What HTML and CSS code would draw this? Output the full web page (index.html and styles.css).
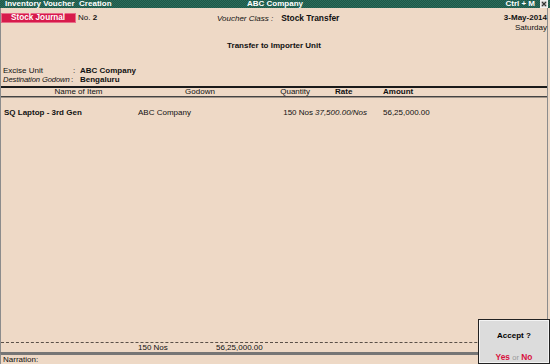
FILE: index.html
```html
<!DOCTYPE html>
<html>
<head>
<meta charset="utf-8">
<link rel="stylesheet" href="styles.css">
</head>
<body>
<div class="screen">
  <div class="titlebar">
    <span class="tb-left">Inventory Voucher&nbsp; Creation</span>
    <span class="tb-center">ABC Company</span>
    <span class="tb-right">Ctrl + M
      <svg class="close" width="8" height="8" viewBox="0 0 8 8"><rect x="0.5" y="0.5" width="7" height="7" fill="#d8d8d8" stroke="#f0f0f0"/><path d="M2 2 L6 6 M6 2 L2 6" stroke="#333" stroke-width="1.2"/></svg>
    </span>
  </div>
  <div class="main">
    <div class="toprow">
      <div class="vtype">Stock Journal</div>
      <div class="vno">No. <b>2</b></div>
      <div class="vclass"><i>Voucher Class :</i><b class="vclass-val">Stock Transfer</b></div>
      <div class="date"><b>3-May-2014</b><span>Saturday</span></div>
    </div>
    <div class="subtitle">Transfer to Importer Unit</div>
    <div class="info">
      <div class="info-row"><span class="lbl">Excise Unit</span><span class="colon">:</span><b>ABC Company</b></div>
      <div class="info-row"><i class="lbl lbl-it">Destination Godown</i><span class="colon">:</span><b>Bengaluru</b></div>
    </div>
    <div class="grid head">
      <div class="c-name">Name of Item</div>
      <div class="c-godown">Godown</div>
      <div class="c-qty">Quantity</div>
      <div class="c-rate"><b>Rate</b></div>
      <div class="c-amt"><b>Amount</b></div>
    </div>
    <div class="grid row">
      <div class="r-name"><b>SQ Laptop - 3rd Gen</b></div>
      <div class="r-godown">ABC Company</div>
      <div class="r-qty">150 Nos</div>
      <div class="r-rate"><i>37,500.00/Nos</i></div>
      <div class="r-amt">56,25,000.00</div>
    </div>
    <div class="spacer"></div>
    <div class="totals">
      <div class="t-qty">150 Nos</div>
      <div class="t-amt">56,25,000.00</div>
    </div>
  </div>
  <div class="narration">Narration:</div>
  <div class="accept">
    <div class="accept-q">Accept ?</div>
    <div class="accept-a"><b class="red">Yes</b> <span class="or">or</span> <b class="red">No</b></div>
  </div>
</div>
</body>
</html>
```

FILE: styles.css
```css
* { box-sizing: border-box; margin: 0; padding: 0; }
html, body { width: 550px; height: 364px; overflow: hidden; }
body {
  background: #eed9c6;
  font-family: "Liberation Sans", Arial, sans-serif;
  font-size: 8px;
  color: #111;
}
.screen {
  position: relative;
  width: 550px;
  height: 364px;
  display: flex;
  flex-direction: column;
}
.titlebar {
  height: 8px;
  line-height: 8px;
  display: flex;
  align-items: center;
  justify-content: space-between;
  color: #fff;
  font-weight: bold;
  font-size: 8px;
  background: repeating-conic-gradient(#1c5949 0 25%, #2c6b5a 0 50%) 0 0 / 2px 2px;
  padding: 0 2px 0 5px;
  position: relative;
}
.tb-center {
  position: absolute;
  left: 0; right: 0;
  text-align: center;
  pointer-events: none;
}
.tb-right { display: flex; align-items: center; gap: 5px; }
.close { display: block; }
.main {
  flex: 1;
  display: flex;
  flex-direction: column;
  border-left: 1px solid #8c8c8c;
  border-right: 1px solid #8c8c8c;
  margin-right: 2px;
}
.toprow {
  margin-top: 5px;
  display: flex;
  align-items: flex-start;
  height: 20px;
}
.vtype {
  background: #d71b4b;
  color: #fff;
  font-weight: bold;
  height: 10px;
  line-height: 10px;
  width: 75px;
  padding-left: 10px;
  font-size: 8.2px;
  box-shadow: inset 0 0 0 1px #e86a88;
}
.vno {
  line-height: 10px;
  margin-left: 2px;
  width: 139px;
}
.vclass { line-height: 10px; }
.vclass-val { margin-left: 8px; font-size: 8.4px; }
.date {
  margin-left: auto;
  display: flex;
  flex-direction: column;
  align-items: flex-end;
  line-height: 10px;
}
.subtitle {
  margin-top: 8px;
  text-align: center;
  font-weight: bold;
  line-height: 10px;
}
.info {
  margin-top: 15px;
  display: flex;
  flex-direction: column;
}
.info-row {
  display: flex;
  line-height: 9px;
  padding-left: 2px;
  white-space: nowrap;
}
.lbl { width: 70px; white-space: nowrap; }
.lbl-it { font-size: 7.6px; width: 68px; letter-spacing: -0.1px; }
.lbl-it + .colon { width: 9px; }
.colon { width: 7px; }
.grid {
  display: grid;
  grid-template-columns: 135px 128px 52px 65px 1fr;
}
.head {
  margin-top: 2px;
  border-top: 2px solid #1a1a1a;
  border-bottom: 1px solid #444;
  box-shadow: 0 1px 0 #a09488;
  height: 11px;
  line-height: 8px;
}
.c-name { text-align: center; padding-left: 20px; }
.c-godown { text-align: center; }
.c-qty { text-align: right; padding-right: 6px; }
.c-rate { padding-left: 19px; }
.c-amt { padding-left: 2px; }
.row {
  margin-top: 11px;
  line-height: 10px;
}
.r-name { padding-left: 3px; }
.r-godown { padding-left: 2px; }
.r-qty { text-align: right; padding-right: 3px; }
.r-rate { margin-left: -1px; }
.r-amt { padding-left: 2px; }
.spacer { flex: 1; }
.totals {
  border-top: 1px dashed #5a5048;
  height: 10px;
  line-height: 9px;
  display: flex;
  white-space: nowrap;
}
.t-qty { padding-left: 137px; width: 215px; flex: none; }
.narration {
  border-top: 3px solid #767676;
  height: 12px;
  line-height: 9px;
  padding-left: 2px;
  border-left: 1px solid #8c8c8c;
}
.accept {
  position: absolute;
  left: 478px;
  top: 319px;
  width: 72px;
  height: 45px;
  background: #dcdcdc;
  border: 1px solid #222;
  box-shadow: inset 0 0 0 1px #f4f4f4;
  display: flex;
  flex-direction: column;
  align-items: center;
}
.accept-q {
  margin-top: 11px;
  font-weight: bold;
  line-height: 9px;
  color: #000;
}
.accept-a {
  margin-top: 13px;
  line-height: 9px;
  font-size: 8.4px;
}
.red { color: #d8103e; }
.or { color: #999; font-size: 7.5px; }
```
